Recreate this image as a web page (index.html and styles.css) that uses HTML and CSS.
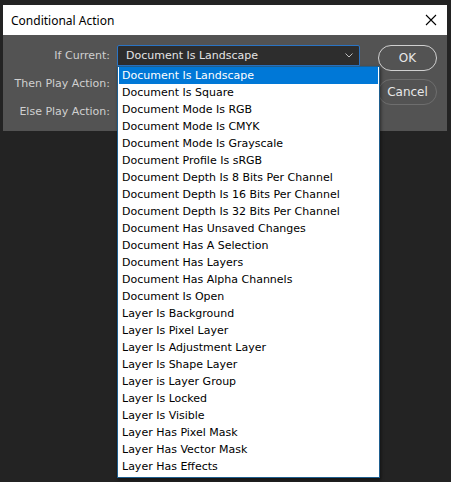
FILE: index.html
```html
<!DOCTYPE html>
<html>
<head>
<meta charset="utf-8">
<link rel="stylesheet" href="styles.css">
</head>
<body>
<div class="dialog">
  <div class="titlebar">
    <span class="title">Conditional Action</span>
    <svg class="close" width="12" height="12" viewBox="0 0 12 12"><path d="M1 1L11 11M11 1L1 11" stroke="#000" stroke-width="1.1" fill="none"/></svg>
  </div>
  <div class="content">
    <div class="form">
      <label class="lbl">If Current:</label>
      <div class="field">
        <div class="select active">
          <span>Document Is Landscape</span>
          <svg class="chev" width="8" height="5" viewBox="0 0 8 5"><path d="M0.5 0.5L4 4L7.5 0.5" stroke="#bdbdbd" stroke-width="1" fill="none"/></svg>
        </div>
        <ul class="menu">
          <li class="sel">Document Is Landscape</li>
          <li>Document Is Square</li>
          <li>Document Mode Is RGB</li>
          <li>Document Mode Is CMYK</li>
          <li>Document Mode Is Grayscale</li>
          <li>Document Profile Is sRGB</li>
          <li>Document Depth Is 8 Bits Per Channel</li>
          <li>Document Depth Is 16 Bits Per Channel</li>
          <li>Document Depth Is 32 Bits Per Channel</li>
          <li>Document Has Unsaved Changes</li>
          <li>Document Has A Selection</li>
          <li>Document Has Layers</li>
          <li>Document Has Alpha Channels</li>
          <li>Document Is Open</li>
          <li>Layer Is Background</li>
          <li>Layer Is Pixel Layer</li>
          <li>Layer Is Adjustment Layer</li>
          <li>Layer Is Shape Layer</li>
          <li>Layer is Layer Group</li>
          <li>Layer Is Locked</li>
          <li>Layer Is Visible</li>
          <li>Layer Has Pixel Mask</li>
          <li>Layer Has Vector Mask</li>
          <li>Layer Has Effects</li>
        </ul>
      </div>
      <label class="lbl">Then Play Action:</label>
      <div class="field"><div class="select"></div></div>
      <label class="lbl">Else Play Action:</label>
      <div class="field"><div class="select"></div></div>
    </div>
    <div class="buttons">
      <button class="btn primary">OK</button>
      <button class="btn">Cancel</button>
    </div>
  </div>
</div>
</body>
</html>
```

FILE: styles.css
```css
html, body {
  margin: 0;
  padding: 0;
  background: #232323;
  width: 451px;
  height: 482px;
  overflow: hidden;
}

body {
  padding: 5px 0 0 3px;
  box-sizing: border-box;
  font-family: "DejaVu Sans", sans-serif;
}

.dialog {
  width: 444px;
}

.titlebar {
  height: 30px;
  background: #ffffff;
  display: flex;
  align-items: center;
  justify-content: space-between;
  padding: 0 10px 0 8px;
}

.title {
  font-family: "Noto Sans", sans-serif;
  font-size: 12px;
  color: #000;
}

.close {
  display: block;
}

.content {
  height: 96px;
  background: #535353;
  display: flex;
  align-items: flex-start;
  padding-top: 10px;
  box-sizing: border-box;
}

.form {
  display: grid;
  grid-template-columns: 107px 243px;
  column-gap: 7px;
  row-gap: 7px;
  align-items: center;
}

.lbl {
  text-align: right;
  color: #d0d0d0;
  font-size: 11px;
  white-space: nowrap;
}

.field {
  position: relative;
}

.select {
  height: 21px;
  box-sizing: border-box;
  background: #2d2d2d;
  border: 1px solid #3d3d3d;
  border-radius: 2px;
  display: flex;
  align-items: center;
  justify-content: space-between;
  padding: 0 6px 0 8px;
  color: #e4e4e4;
  font-size: 11px;
}

.select.active {
  border-color: #2a74c4;
  border-radius: 2px 2px 0 0;
}

.chev {
  display: block;
}

.menu {
  position: absolute;
  top: 100%;
  left: 0;
  width: 263px;
  margin: 0;
  padding: 0 1px 2px 1px;
  list-style: none;
  background: #ffffff;
  border: 1px solid #1f5f8f;
  box-sizing: border-box;
  box-shadow: 1px 2px 3px rgba(0,0,0,0.5);
  z-index: 10;
}

.menu li {
  height: 17px;
  line-height: 17px;
  padding-left: 3px;
  font-size: 11px;
  color: #000;
  white-space: nowrap;
}

.menu li.sel {
  background: #0078d7;
  color: #fff;
}

.buttons {
  display: flex;
  flex-direction: column;
  gap: 8px;
  margin-left: 18px;
}

.btn {
  width: 59px;
  height: 26px;
  border-radius: 13px;
  background: transparent;
  border: 1.5px solid #6e6e6e;
  color: #e8e8e8;
  font-family: "DejaVu Sans", sans-serif;
  font-size: 12px;
  padding: 0;
}

.btn.primary {
  border-color: #d0d0d0;
}
```
